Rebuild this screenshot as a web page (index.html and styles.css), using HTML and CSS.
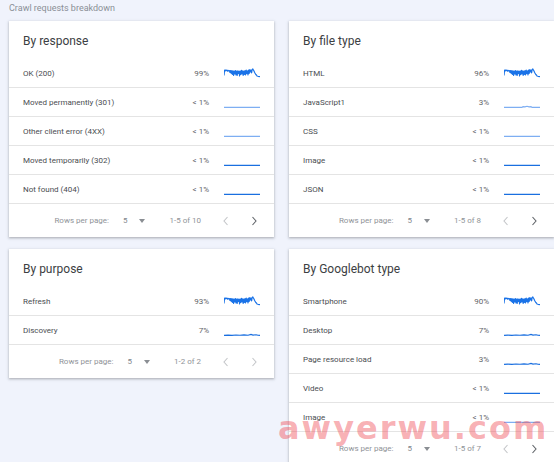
FILE: index.html
```html
<!DOCTYPE html>
<html>
<head>
<meta charset="utf-8">
<link rel="stylesheet" href="styles.css">
</head>
<body>
<svg class="defs" width="0" height="0">
  <defs>
    <symbol id="jag" viewBox="0 0 36 12">
      <polyline fill="none" stroke="#1a73e8" stroke-width="1.2" stroke-linejoin="round" points="0,7.5 0.6,2 1.2,3 1.8,2 2.4,2.6 3,2.2 3.6,3.2 4.2,2.4 4.8,3 5.4,2.6 6,4.5 6.6,2.5 7.2,5.5 7.8,2.5 8.4,6.5 9,2.8 9.6,7.5 10.2,3 10.8,6 11.4,2.6 12,7 12.6,3 13.2,7.5 13.8,2.8 14.4,5.5 15,3.2 15.6,8 16.2,3 16.8,6.5 17.4,2.4 18,6 18.6,2.8 19.2,7.5 19.8,3 20.4,6.5 21,2.5 21.6,7 22.2,2.2 22.8,5.5 23.4,2.8 24,7 24.6,2 25.2,5.5 25.8,1.6 26.4,4 27,2 27.6,5 28.2,1.5 28.8,1 29.4,2 30,3 30.6,4.5 31.2,5.5 31.8,6.5 32.4,7 33,8 34,8.3 36,8.6"/>
    </symbol>
    <symbol id="flat-light" viewBox="0 0 36 12">
      <polyline fill="none" stroke="#7eaef2" stroke-width="1.2" points="0,10.4 36,10.4"/>
    </symbol>
    <symbol id="flat-dark" viewBox="0 0 36 12">
      <polyline fill="none" stroke="#1a6fe0" stroke-width="1.2" points="0,10.4 36,10.4"/>
    </symbol>
    <symbol id="bump-light" viewBox="0 0 36 12">
      <polyline fill="none" stroke="#7eaef2" stroke-width="1.2" points="0,10.4 18,10.4 19,9.6 21,9.9 23,9.3 25,9.9 27,9.6 28,10.4 36,10.4"/>
    </symbol>
    <symbol id="wig-dark" viewBox="0 0 36 12">
      <polyline fill="none" stroke="#1a6fe0" stroke-width="1.1" points="0,10.4 4,10.1 8,10.4 12,10 16,10.3 20,9.9 24,10.3 27,9.4 29,10.1 32,9.8 34,10.3 36,10.4"/>
    </symbol>
    <symbol id="chev-l" viewBox="0 0 8 10">
      <polyline fill="none" stroke="currentColor" stroke-width="1.1" points="5.5,1 2,5 5.5,9"/>
    </symbol>
    <symbol id="chev-r" viewBox="0 0 8 10">
      <polyline fill="none" stroke="currentColor" stroke-width="1.1" points="2.5,1 6,5 2.5,9"/>
    </symbol>
  </defs>
</svg>

<div class="page">
  <div class="page-title">Crawl requests breakdown</div>
  <div class="grid">
    <section class="card">
      <h2 class="card-title">By response</h2>
      <div class="row"><span class="label">OK (200)</span><span class="pct">99%</span><svg class="spark" viewBox="0 0 36 12"><use href="#jag"/></svg></div>
      <div class="row"><span class="label">Moved permanently (301)</span><span class="pct">&lt; 1%</span><svg class="spark" viewBox="0 0 36 12"><use href="#flat-light"/></svg></div>
      <div class="row"><span class="label">Other client error (4XX)</span><span class="pct">&lt; 1%</span><svg class="spark" viewBox="0 0 36 12"><use href="#flat-light"/></svg></div>
      <div class="row"><span class="label">Moved temporarily (302)</span><span class="pct">&lt; 1%</span><svg class="spark" viewBox="0 0 36 12"><use href="#flat-dark"/></svg></div>
      <div class="row"><span class="label">Not found (404)</span><span class="pct">&lt; 1%</span><svg class="spark" viewBox="0 0 36 12"><use href="#flat-dark"/></svg></div>
      <div class="pager">
        <span class="rpp">Rows per page:</span><span class="size">5</span><span class="caret"></span><span class="range">1-5 of 10</span>
        <svg class="chev off" viewBox="0 0 8 10"><use href="#chev-l"/></svg><svg class="chev on" viewBox="0 0 8 10"><use href="#chev-r"/></svg>
      </div>
    </section>

    <section class="card">
      <h2 class="card-title">By file type</h2>
      <div class="row"><span class="label">HTML</span><span class="pct">96%</span><svg class="spark" viewBox="0 0 36 12"><use href="#jag"/></svg></div>
      <div class="row"><span class="label">JavaScript1</span><span class="pct">3%</span><svg class="spark" viewBox="0 0 36 12"><use href="#bump-light"/></svg></div>
      <div class="row"><span class="label">CSS</span><span class="pct">&lt; 1%</span><svg class="spark" viewBox="0 0 36 12"><use href="#flat-light"/></svg></div>
      <div class="row"><span class="label">Image</span><span class="pct">&lt; 1%</span><svg class="spark" viewBox="0 0 36 12"><use href="#flat-dark"/></svg></div>
      <div class="row"><span class="label">JSON</span><span class="pct">&lt; 1%</span><svg class="spark" viewBox="0 0 36 12"><use href="#flat-dark"/></svg></div>
      <div class="pager">
        <span class="rpp">Rows per page:</span><span class="size">5</span><span class="caret"></span><span class="range">1-5 of 8</span>
        <svg class="chev off" viewBox="0 0 8 10"><use href="#chev-l"/></svg><svg class="chev on" viewBox="0 0 8 10"><use href="#chev-r"/></svg>
      </div>
    </section>

    <section class="card">
      <h2 class="card-title">By purpose</h2>
      <div class="row"><span class="label">Refresh</span><span class="pct">93%</span><svg class="spark" viewBox="0 0 36 12"><use href="#jag"/></svg></div>
      <div class="row"><span class="label">Discovery</span><span class="pct">7%</span><svg class="spark" viewBox="0 0 36 12"><use href="#wig-dark"/></svg></div>
      <div class="pager">
        <span class="rpp">Rows per page:</span><span class="size">5</span><span class="caret"></span><span class="range">1-2 of 2</span>
        <svg class="chev off" viewBox="0 0 8 10"><use href="#chev-l"/></svg><svg class="chev off" viewBox="0 0 8 10"><use href="#chev-r"/></svg>
      </div>
    </section>

    <section class="card">
      <h2 class="card-title">By Googlebot type</h2>
      <div class="row"><span class="label">Smartphone</span><span class="pct">90%</span><svg class="spark" viewBox="0 0 36 12"><use href="#jag"/></svg></div>
      <div class="row"><span class="label">Desktop</span><span class="pct">7%</span><svg class="spark" viewBox="0 0 36 12"><use href="#wig-dark"/></svg></div>
      <div class="row"><span class="label">Page resource load</span><span class="pct">3%</span><svg class="spark" viewBox="0 0 36 12"><use href="#wig-dark"/></svg></div>
      <div class="row"><span class="label">Video</span><span class="pct">&lt; 1%</span><svg class="spark" viewBox="0 0 36 12"><use href="#flat-dark"/></svg></div>
      <div class="row"><span class="label">Image</span><span class="pct">&lt; 1%</span><svg class="spark" viewBox="0 0 36 12"><use href="#flat-light"/></svg></div>
      <div class="pager">
        <span class="rpp">Rows per page:</span><span class="size">5</span><span class="caret"></span><span class="range">1-5 of 7</span>
        <svg class="chev off" viewBox="0 0 8 10"><use href="#chev-l"/></svg><svg class="chev on" viewBox="0 0 8 10"><use href="#chev-r"/></svg>
      </div>
    </section>
  </div>
</div>
<div class="watermark">awyerwu.com</div>
</body>
</html>
```

FILE: styles.css
```css
html, body {
  margin: 0;
  padding: 0;
  overflow: hidden;
  background: #f0f3fc;
  font-family: Roboto, "Liberation Sans", Arial, sans-serif;
}

.defs {
  position: absolute;
  width: 0;
  height: 0;
}

.page {
  padding-left: 9px;
}

.page-title {
  height: 21px;
  box-sizing: border-box;
  padding-top: 2px;
  font-size: 9px;
  line-height: 12px;
  color: #8a8f96;
}

.grid {
  display: grid;
  grid-template-columns: 265px 265px;
  column-gap: 15px;
  row-gap: 12px;
  align-items: start;
}

.card {
  background: #fff;
  box-shadow: 0 1px 2px rgba(60, 64, 67, 0.3), 0 1px 3px 1px rgba(60, 64, 67, 0.1);
}

.card-title {
  margin: 0;
  height: 38px;
  box-sizing: border-box;
  padding: 12px 14px 0;
  font-size: 12px;
  line-height: 16px;
  font-weight: 400;
  color: #3c4043;
}

.row {
  display: flex;
  align-items: center;
  height: 29px;
  box-sizing: border-box;
  padding: 0 14px;
  border-bottom: 1px solid #e4e4e4;
  font-size: 8px;
  color: #4a4d51;
}

.label {
  flex: 1;
}

.pct {
  color: #5f6368;
}

.spark {
  width: 36px;
  height: 12px;
  margin-left: 15px;
  margin-top: 1px;
}

.pager {
  display: flex;
  align-items: center;
  justify-content: flex-end;
  height: 33px;
  padding-right: 16px;
  font-size: 8px;
  color: #8f9398;
}

.size {
  margin-left: 14px;
  color: #80858b;
}

.caret {
  margin-left: 12px;
  width: 0;
  height: 0;
  border-left: 3.5px solid transparent;
  border-right: 3.5px solid transparent;
  border-top: 4px solid #8a8e93;
}

.range {
  margin-left: 24px;
  margin-right: 21px;
}

.chev {
  width: 8px;
  height: 10px;
}

.chev + .chev {
  margin-left: 20px;
}

.chev.off {
  color: #c4c6c9;
}

.chev.on {
  color: #5f6368;
}

.watermark {
  position: absolute;
  left: 278px;
  top: 412px;
  font-family: "DejaVu Sans", sans-serif;
  font-weight: bold;
  font-size: 32px;
  line-height: 32px;
  letter-spacing: 2px;
  color: rgba(240, 80, 90, 0.45);
  white-space: nowrap;
  pointer-events: none;
}
```
